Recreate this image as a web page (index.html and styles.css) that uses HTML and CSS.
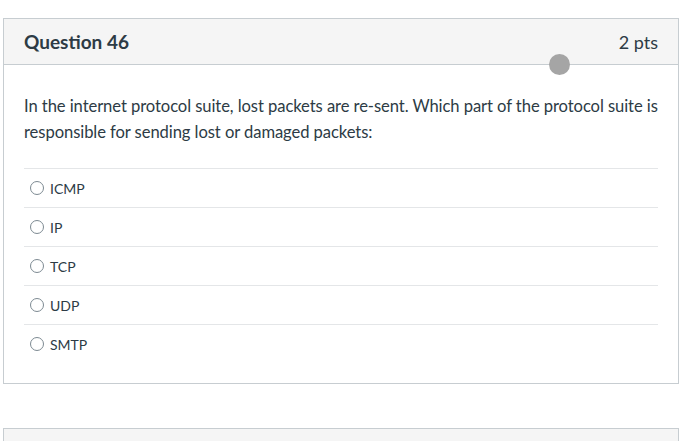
FILE: index.html
```html
<!DOCTYPE html>
<html>
<head>
<meta charset="utf-8">
<link rel="stylesheet" href="styles.css">
</head>
<body>
<div class="page">
  <div class="card">
    <div class="card-header">
      <span class="q-title">Question 46</span>
      <span class="q-pts">2 pts</span>
      <span class="dot"></span>
    </div>
    <div class="card-body">
      <p class="q-text">In the internet protocol suite, lost packets are re-sent. Which part of the protocol suite is responsible for sending lost or damaged packets:</p>
      <div class="answers">
        <label class="answer"><span class="radio"></span><span>ICMP</span></label>
        <label class="answer"><span class="radio"></span><span>IP</span></label>
        <label class="answer"><span class="radio"></span><span>TCP</span></label>
        <label class="answer"><span class="radio"></span><span>UDP</span></label>
        <label class="answer"><span class="radio"></span><span>SMTP</span></label>
      </div>
    </div>
  </div>
  <div class="card next"></div>
</div>
</body>
</html>
```

FILE: styles.css
```css
html, body { margin: 0; padding: 0; background: #fff; }
body { font-family: Lato, "Open Sans", sans-serif; color: #2d3b45; }
.page { padding: 18px 21px 0 3px; display: flex; flex-direction: column; gap: 44px; }
.card { border: 1px solid #c7cdd1; background: #fff; }
.card-header {
  position: relative;
  height: 45px;
  background: #f5f5f5;
  border-bottom: 1px solid #c7cdd1;
  display: flex; align-items: center; justify-content: space-between;
  padding: 0 20px 0 20px;
}
.q-title { font-size: 19px; font-weight: 700; color: #2d3b45; }
.q-pts { font-size: 18px; font-weight: 400; color: #2d3b45; }
.dot {
  position: absolute; left: 545px; top: 35px;
  width: 21px; height: 21px; border-radius: 50%;
  background: #a5a5a5;
}
.card-body { padding: 28px 20px 20px 20px; }
.q-text { margin: 0 0 23px 0; font-size: 16.6px; line-height: 26px; letter-spacing: -0.08px; }
.answers { display: flex; flex-direction: column; }
.answer {
  display: flex; align-items: center; gap: 6px;
  height: 38px; border-top: 1px solid #e4e6e8;
  padding-left: 6px; font-size: 14px;
}
.radio {
  border-radius: 50%;
  border: 1px solid #7d8a92; background: #fff; box-sizing: border-box;
  width: 14px; height: 14px;
}
.card.next { height: 20px; background: #f5f5f5; }
```
